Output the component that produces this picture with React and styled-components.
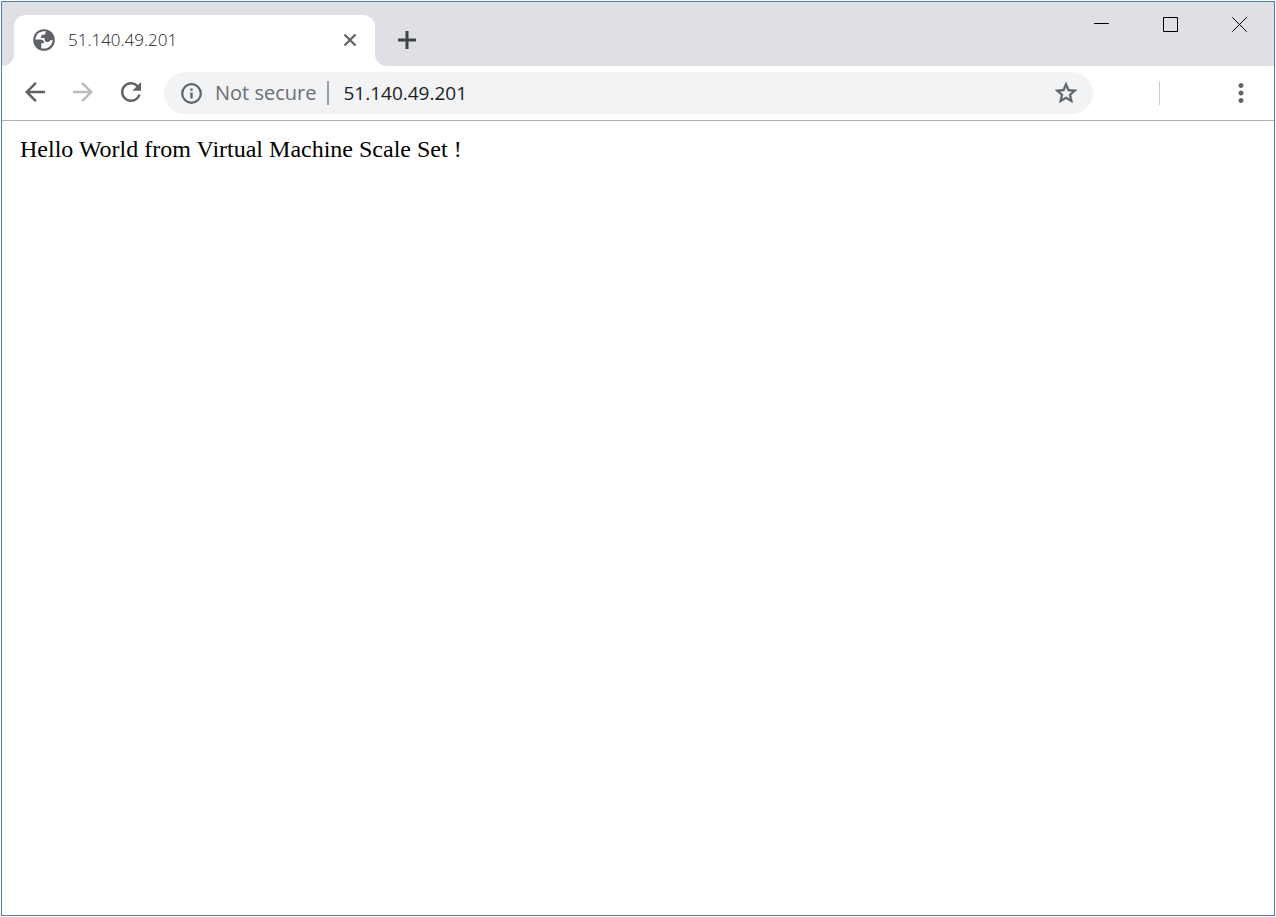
import React from "react";
import styled, { createGlobalStyle } from "styled-components";
import { MdArrowBack, MdArrowForward, MdRefresh, MdMoreVert } from "react-icons/md";

const GlobalStyle = createGlobalStyle`
  * { box-sizing: border-box; }
  body { margin: 0; background: #fff; }
  button { padding: 0; border: 0; background: none; }
`;

const ui = '"Open Sans", "Noto Sans", sans-serif';

const Screen = styled.div`
  display: flex;
  min-height: 100vh;
  padding: 1px;
`;

const BrowserWindow = styled.div`
  flex: 1;
  min-width: 0;
  display: flex;
  flex-direction: column;
  border: 1px solid #4f7cb3;
  background: #fff;
  font-family: ${ui};
`;

const TitleBar = styled.header`
  display: flex;
  height: 64px;
`;

const StripStart = styled.div`
  width: 12px;
  background: #dee0e5;
  border-bottom-right-radius: 12px;
`;

const TabSlot = styled.div`
  display: flex;
  width: 361px;
  padding-top: 13px;
  background: linear-gradient(#dee0e5 32px, #fff 32px);
`;

const Tab = styled.div`
  flex: 1;
  display: flex;
  align-items: center;
  gap: 13px;
  padding: 0 9px 2px 19px;
  background: #fff;
  border-radius: 12px 12px 0 0;
`;

const TabTitle = styled.span`
  flex: 1;
  font-size: 17px;
  font-weight: 300;
  line-height: 24px;
  color: #202124;
`;

const IconButton = styled.button`
  display: flex;
  align-items: center;
  justify-content: center;
  flex: none;
  width: ${(p) => p.$size}px;
  height: ${(p) => p.$size}px;
  color: ${(p) => (p.disabled ? "#babcbe" : "#5f6368")};
`;

const StripEnd = styled.div`
  flex: 1;
  display: flex;
  justify-content: space-between;
  padding-left: 14px;
  background: #dee0e5;
  border-bottom-left-radius: 12px;
`;

const NewTab = styled.div`
  display: flex;
  align-items: center;
  padding: 13px 0 2px;
`;

const WindowControls = styled.div`
  display: flex;
`;

const WindowButton = styled.button`
  display: flex;
  align-items: center;
  justify-content: center;
  width: 69px;
  height: 45px;
  color: #000;
`;

const Toolbar = styled.nav`
  display: flex;
  align-items: center;
  height: 55px;
  padding: 0 9px;
  border-bottom: 1px solid #b3b4b6;
`;

const NavButtons = styled.div`
  display: flex;
  padding-bottom: 2px;
`;

const AddressBar = styled.div`
  flex: 1;
  display: flex;
  align-items: center;
  min-width: 0;
  height: 42px;
  margin: 0 66px 0 9px;
  padding: 0 14px;
  border-radius: 21px;
  background: #f1f3f4;
`;

const Security = styled.label`
  margin: 0 11px;
  font-size: 20px;
  line-height: 28px;
  white-space: nowrap;
  color: #6b6e73;
`;

const Divider = styled.span`
  flex: none;
  width: ${(p) => p.$width}px;
  height: 24px;
  background: ${(p) => p.$color};
`;

const MenuArea = styled.div`
  display: flex;
  align-items: center;
  gap: 57px;
`;

const Address = styled.input`
  flex: 1;
  min-width: 0;
  padding: 0 0 0 14px;
  border: 0;
  outline: 0;
  background: none;
  font-family: ${ui};
  font-size: 19px;
  line-height: 28px;
  color: #202124;
`;

const Page = styled.main`
  flex: 1;
  padding: 14px 18px;
  font-family: "Liberation Serif", serif;
  font-size: 24px;
  line-height: 28px;
  color: #000;
`;

const Globe = () => (
  <svg width="22" height="22" viewBox="0 0 22 22" aria-hidden="true">
    <circle cx="11" cy="11" r="10.8" fill="#5f6368" />
    <path
      fill="#fff"
      d="M13.2 2.6C8 1.2 2.7 5.1 2.4 10.5H7c2.6 0 4.3 1.5 4.3 3.8h-3v4.9c5.6 1.7 11.2-2.4 11.3-8.2h-2.1c-.6 1.6-1.7 2-3.3 2-1.9 0-2.6-1-2.6-2.8V9H7.9C7.8 6.5 8.8 5.4 11 5.4h1.2c0-1.2.3-2 1-2.8Z"
    />
  </svg>
);

const Info = () => (
  <svg width="26" height="26" viewBox="0 0 26 26" fill="none" stroke="currentColor" aria-hidden="true">
    <circle cx="13.5" cy="13.5" r="9.3" strokeWidth="2.2" />
    <path d="M13.5 12.4V18.5M13.5 8.5V10.8" strokeWidth="2.3" />
  </svg>
);

const Star = () => (
  <svg width="26" height="26" viewBox="0 0 24 24" fill="currentColor" stroke="currentColor" strokeWidth="0.5" aria-hidden="true">
    <path d="M22 9.24l-7.19-.62L12 2 9.19 8.63 2 9.24l5.46 4.73L5.82 21 12 17.27 18.18 21l-1.63-7.03L22 9.24zM12 15.4l-3.76 2.27 1-4.28-3.32-2.88 4.38-.38L12 6.1l1.71 4.04 4.38.38-3.32 2.88 1 4.28L12 15.4z" />
  </svg>
);

export default function App() {
  return (
    <Screen>
      <GlobalStyle />
      <BrowserWindow>
        <TitleBar>
          <StripStart />
          <TabSlot>
            <Tab>
              <Globe />
              <TabTitle>51.140.49.201</TabTitle>
              <IconButton $size={32} aria-label="Close tab">
                <svg width="14" height="14" viewBox="0 0 14 14" stroke="currentColor" strokeWidth="2.2">
                  <path d="M1.5 1.5 12.5 12.5M12.5 1.5 1.5 12.5" />
                </svg>
              </IconButton>
            </Tab>
          </TabSlot>
          <StripEnd>
            <NewTab>
              <IconButton $size={36} aria-label="New tab">
                <svg width="18" height="18" viewBox="0 0 18 18" stroke="#3f4246" strokeWidth="3">
                  <path d="M9 0V18M0 9H18" />
                </svg>
              </IconButton>
            </NewTab>
            <WindowControls>
              <WindowButton aria-label="Minimize">
                <svg width="15" height="15" viewBox="0 0 15 15" stroke="currentColor">
                  <path d="M0 6.5H15" />
                </svg>
              </WindowButton>
              <WindowButton aria-label="Maximize">
                <svg width="15" height="15" viewBox="0 0 15 15" fill="none" stroke="currentColor">
                  <path d="M.5.5H14.5V14.5H.5Z" />
                </svg>
              </WindowButton>
              <WindowButton aria-label="Close">
                <svg width="15" height="15" viewBox="0 0 15 15" stroke="currentColor">
                  <path d="M.3.3 14.7 14.7M14.7.3.3 14.7" />
                </svg>
              </WindowButton>
            </WindowControls>
          </StripEnd>
        </TitleBar>
        <Toolbar>
          <NavButtons>
            <IconButton $size={48} aria-label="Back"><MdArrowBack size={30} /></IconButton>
            <IconButton $size={48} aria-label="Forward" disabled><MdArrowForward size={30} /></IconButton>
            <IconButton $size={48} aria-label="Reload"><MdRefresh size={30} /></IconButton>
          </NavButtons>
          <AddressBar>
            <IconButton $size={26} aria-label="Site information"><Info /></IconButton>
            <Security htmlFor="address">Not secure</Security>
            <Divider $width={2} $color="#9a9da1" />
            <Address id="address" type="text" defaultValue="51.140.49.201" />
            <IconButton $size={26} aria-label="Bookmark this page"><Star /></IconButton>
          </AddressBar>
          <MenuArea>
            <Divider $width={1} $color="#cccdcf" />
            <IconButton $size={48} aria-label="Menu"><MdMoreVert size={30} /></IconButton>
          </MenuArea>
        </Toolbar>
        <Page>Hello World from Virtual Machine Scale Set !</Page>
      </BrowserWindow>
    </Screen>
  );
}
